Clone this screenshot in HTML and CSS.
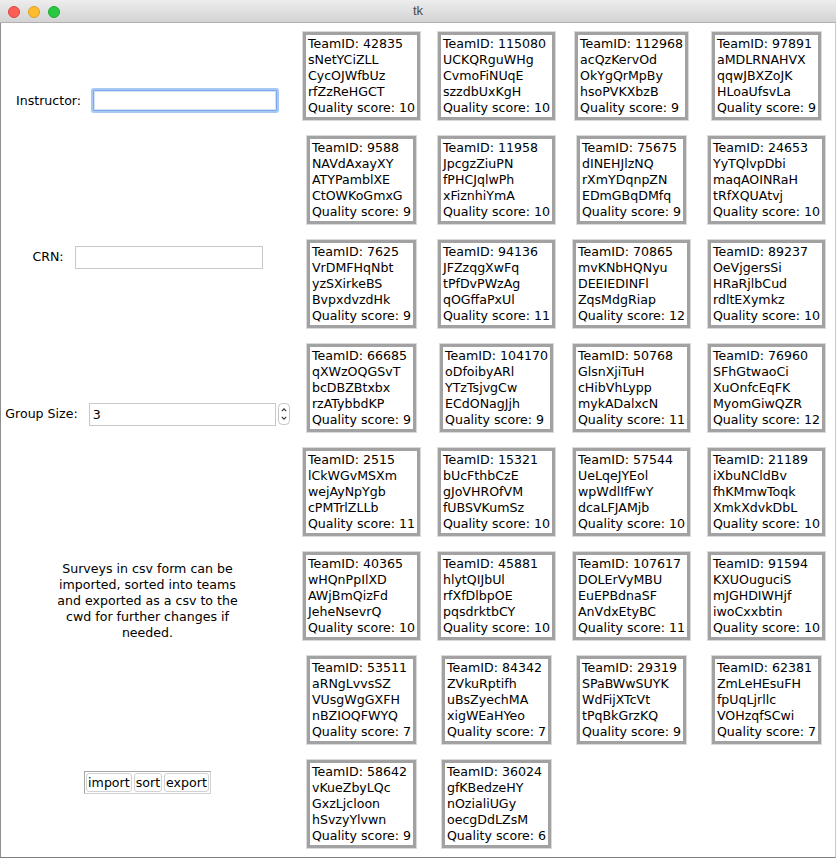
FILE: index.html
```html
<!DOCTYPE html>
<html>
<head>
<meta charset="utf-8">
<link rel="stylesheet" href="styles.css">
</head>
<body>
<div class="window">
  <div class="titlebar">
    <div class="lights">
      <span class="light red"></span>
      <span class="light yellow"></span>
      <span class="light green"></span>
    </div>
    <div class="title">tk</div>
  </div>
  <div class="content">
    <div class="side">
      <div class="srow r1">
        <span class="label">Instructor:</span>
        <span class="entry focus"></span>
      </div>
      <div class="srow r2">
        <span class="label">CRN:</span>
        <span class="entry"></span>
      </div>
      <div class="srow r3">
        <span class="label">Group Size:</span>
        <span class="entry spinentry">3</span>
        <span class="spinner">
          <svg width="12" height="22" viewBox="0 0 12 22">
            <rect x="0.5" y="0.5" width="11" height="21" rx="4" ry="4" fill="#fff" stroke="#c4c4c4"/>
            <path d="M3.8 8.2 L6 5.8 L8.2 8.2" fill="none" stroke="#333" stroke-width="1.1"/>
            <path d="M3.8 13.8 L6 16.2 L8.2 13.8" fill="none" stroke="#333" stroke-width="1.1"/>
          </svg>
        </span>
      </div>
      <div class="srow r4">
        <p class="desc">Surveys in csv form can be<br>imported, sorted into teams<br>and exported as a csv to the<br>cwd for further changes if<br>needed.</p>
      </div>
      <div class="srow r5">
        <div class="btngroup">
          <span class="btn">import</span><span class="btn">sort</span><span class="btn">export</span>
        </div>
      </div>
    </div>
    <div class="grid">
      <div class="cell"><div class="card">TeamID: 42835<br>sNetYCiZLL<br>CycOJWfbUz<br>rfZzReHGCT<br>Quality score: 10</div></div>
      <div class="cell"><div class="card">TeamID: 115080<br>UCKQRguWHg<br>CvmoFiNUqE<br>szzdbUxKgH<br>Quality score: 10</div></div>
      <div class="cell"><div class="card">TeamID: 112968<br>acQzKervOd<br>OkYgQrMpBy<br>hsoPVKXbzB<br>Quality score: 9</div></div>
      <div class="cell"><div class="card">TeamID: 97891<br>aMDLRNAHVX<br>qqwJBXZoJK<br>HLoaUfsvLa<br>Quality score: 9</div></div>

      <div class="cell"><div class="card">TeamID: 9588<br>NAVdAxayXY<br>ATYPamblXE<br>CtOWKoGmxG<br>Quality score: 9</div></div>
      <div class="cell"><div class="card">TeamID: 11958<br>JpcgzZiuPN<br>fPHCJqlwPh<br>xFiznhiYmA<br>Quality score: 10</div></div>
      <div class="cell"><div class="card">TeamID: 75675<br>dINEHJlzNQ<br>rXmYDqnpZN<br>EDmGBqDMfq<br>Quality score: 9</div></div>
      <div class="cell"><div class="card">TeamID: 24653<br>YyTQlvpDbi<br>maqAOINRaH<br>tRfXQUAtvj<br>Quality score: 10</div></div>

      <div class="cell"><div class="card">TeamID: 7625<br>VrDMFHqNbt<br>yzSXirkeBS<br>BvpxdvzdHk<br>Quality score: 9</div></div>
      <div class="cell"><div class="card">TeamID: 94136<br>JFZzqgXwFq<br>tPfDvPWzAg<br>qOGffaPxUl<br>Quality score: 11</div></div>
      <div class="cell"><div class="card">TeamID: 70865<br>mvKNbHQNyu<br>DEEIEDINFl<br>ZqsMdgRiap<br>Quality score: 12</div></div>
      <div class="cell"><div class="card">TeamID: 89237<br>OeVjgersSi<br>HRaRjlbCud<br>rdltEXymkz<br>Quality score: 10</div></div>

      <div class="cell"><div class="card">TeamID: 66685<br>qXWzOQGSvT<br>bcDBZBtxbx<br>rzATybbdKP<br>Quality score: 9</div></div>
      <div class="cell"><div class="card">TeamID: 104170<br>oDfoibyARl<br>YTzTsjvgCw<br>ECdONagJjh<br>Quality score: 9</div></div>
      <div class="cell"><div class="card">TeamID: 50768<br>GlsnXjiTuH<br>cHibVhLypp<br>mykADalxcN<br>Quality score: 11</div></div>
      <div class="cell"><div class="card">TeamID: 76960<br>SFhGtwaoCi<br>XuOnfcEqFK<br>MyomGiwQZR<br>Quality score: 12</div></div>

      <div class="cell"><div class="card">TeamID: 2515<br>lCkWGvMSXm<br>wejAyNpYgb<br>cPMTrlZLLb<br>Quality score: 11</div></div>
      <div class="cell"><div class="card">TeamID: 15321<br>bUcFthbCzE<br>gJoVHROfVM<br>fUBSVKumSz<br>Quality score: 10</div></div>
      <div class="cell"><div class="card">TeamID: 57544<br>UeLqeJYEol<br>wpWdlIfFwY<br>dcaLFJAMjb<br>Quality score: 10</div></div>
      <div class="cell"><div class="card">TeamID: 21189<br>iXbuNCldBv<br>fhKMmwToqk<br>XmkXdvkDbL<br>Quality score: 10</div></div>

      <div class="cell"><div class="card">TeamID: 40365<br>wHQnPpIlXD<br>AWjBmQizFd<br>JeheNsevrQ<br>Quality score: 10</div></div>
      <div class="cell"><div class="card">TeamID: 45881<br>hlytQIJbUl<br>rfXfDlbpOE<br>pqsdrktbCY<br>Quality score: 10</div></div>
      <div class="cell"><div class="card">TeamID: 107617<br>DOLErVyMBU<br>EuEPBdnaSF<br>AnVdxEtyBC<br>Quality score: 11</div></div>
      <div class="cell"><div class="card">TeamID: 91594<br>KXUOuguciS<br>mJGHDIWHjf<br>iwoCxxbtin<br>Quality score: 10</div></div>

      <div class="cell"><div class="card">TeamID: 53511<br>aRNgLvvsSZ<br>VUsgWgGXFH<br>nBZIOQFWYQ<br>Quality score: 7</div></div>
      <div class="cell"><div class="card">TeamID: 84342<br>ZVkuRptifh<br>uBsZyechMA<br>xigWEaHYeo<br>Quality score: 7</div></div>
      <div class="cell"><div class="card">TeamID: 29319<br>SPaBWwSUYK<br>WdFijXTcVt<br>tPqBkGrzKQ<br>Quality score: 9</div></div>
      <div class="cell"><div class="card">TeamID: 62381<br>ZmLeHEsuFH<br>fpUqLjrllc<br>VOHzqfSCwi<br>Quality score: 7</div></div>

      <div class="cell"><div class="card">TeamID: 58642<br>vKueZbyLQc<br>GxzLjcloon<br>hSvzyYlvwn<br>Quality score: 9</div></div>
      <div class="cell"><div class="card">TeamID: 36024<br>gfKBedzeHY<br>nOzialiUGy<br>oecgDdLZsM<br>Quality score: 6</div></div>
    </div>
  </div>
</div>
</body>
</html>
```

FILE: styles.css
```css
* { box-sizing: border-box; }
html, body {
  margin: 0;
  padding: 0;
  background: #ffffff;
}
body {
  font-family: "DejaVu Sans", "Liberation Sans", sans-serif;
  font-size: 12.6px;
  color: #000;
}
.window {
  width: 836px;
  height: 858px;
  border-left: 1px solid #8f8f8f;
  border-right: 1px solid #c9c9c9;
  border-bottom: 1px solid #7e7e7e;
  background: #fff;
  display: flex;
  flex-direction: column;
}
.titlebar {
  height: 23px;
  flex: none;
  background: linear-gradient(#ededed, #d3d3d3);
  border-bottom: 1px solid #b1b1b1;
  display: flex;
  align-items: center;
  justify-content: center;
  position: relative;
  margin: 0 -1px;
}
.lights {
  position: absolute;
  left: 8px;
  top: 6px;
  display: flex;
  gap: 8px;
}
.light {
  width: 12px;
  height: 12px;
  border-radius: 50%;
  display: block;
}
.red { background: #fc5f57; border: 0.5px solid #de4640; }
.yellow { background: #fdbc2e; border: 0.5px solid #dd9f22; }
.green { background: #28c840; border: 0.5px solid #1ea931; }
.title {
  font-family: "Liberation Sans", "DejaVu Sans", sans-serif;
  font-size: 13px;
  color: #4b4b4b;
  margin-top: -1px;
}
.content {
  flex: 1;
  display: flex;
}
.side {
  width: 293px;
  flex: none;
  display: flex;
  flex-direction: column;
}
.srow {
  display: flex;
  align-items: center;
  justify-content: center;
}
.r1 { height: 155px; }
.r2 { height: 158px; }
.r3 { height: 156px; }
.r4 { height: 218px; }
.r5 { height: 145px; }
.label {
  white-space: nowrap;
  line-height: 16px;
}
.r1 .label { margin-right: 10px; }
.r2 .label { margin-right: 11px; }
.r3 .label { margin-right: 11px; }
.entry {
  display: block;
  width: 188px;
  height: 23px;
  border: 1px solid #c8c8c8;
  background: #fff;
}
.entry.focus {
  width: 184px;
  height: 21px;
  border: 1px solid #7ba7ec;
  box-shadow: 0 0 0 2px #a9c9f5, inset 0 0 0 1px #d3e3fa;
  border-radius: 1px;
  margin-left: 2px;
  margin-right: 2px;
}
.spinentry {
  width: 187px;
  padding-left: 3px;
  line-height: 21px;
}
.spinner {
  display: block;
  width: 12px;
  height: 22px;
  margin-left: 2px;
}
.spinner svg { display: block; }
.desc {
  margin: 0;
  text-align: center;
  line-height: 16px;
}
.btngroup {
  display: flex;
  gap: 2px;
  padding: 1px;
  border: 1px solid #a7a7a7;
  border-right-color: #d0d0d0;
  border-bottom-color: #d0d0d0;
}
.btn {
  display: block;
  height: 19px;
  line-height: 17px;
  padding: 0 1px;
  border: 1px solid #d2d2d2;
  border-radius: 3px;
  background: #fff;
  white-space: nowrap;
}
.grid {
  flex: 1;
  display: grid;
  grid-template-columns: repeat(4, 135px);
  grid-auto-rows: 104px;
  padding-top: 1px;
}
.cell {
  display: flex;
  align-items: center;
  justify-content: center;
}
.card {
  border: 3px solid #a2a2a2;
  outline: 1px solid #dadada;
  padding: 1px 2px;
  line-height: 16px;
  white-space: nowrap;
  background: #fff;
}
```
